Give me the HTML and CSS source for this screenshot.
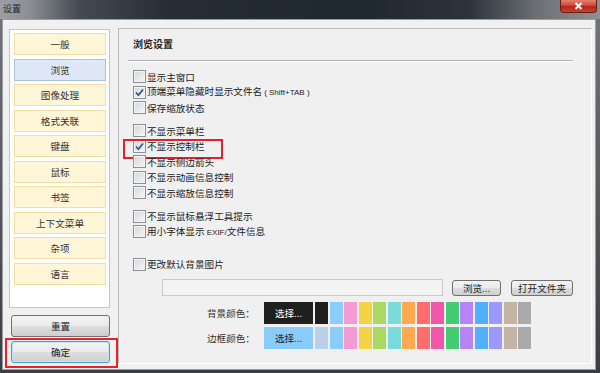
FILE: index.html
```html
<!DOCTYPE html>
<html lang="zh-CN">
  <head>
    <meta charset="utf-8">
    <title>设置</title>
    <link rel="stylesheet" href="styles.css">
  </head>
  <body>

  <div class="window">
    <div class="titlebar">
      <span class="title">设置</span>
      <span class="close">
        <svg width="9" height="8" viewBox="0 0 9 8"><path d="M1.5 1 L7.5 7 M7.5 1 L1.5 7" stroke="#fff" stroke-width="2"/></svg>
      </span>
    </div>

    <div class="client">
      <div class="sidebar">
        <div class="nav">
          <div class="nav-item">一般</div>
          <div class="nav-item active">浏览</div>
          <div class="nav-item">图像处理</div>
          <div class="nav-item">格式关联</div>
          <div class="nav-item">键盘</div>
          <div class="nav-item">鼠标</div>
          <div class="nav-item">书签</div>
          <div class="nav-item">上下文菜单</div>
          <div class="nav-item">杂项</div>
          <div class="nav-item">语言</div>
        </div>
        <button class="btn reset">重置</button>
        <button class="btn ok marked">确定</button>
      </div>

      <div class="group">
        <div class="group-title">浏览设置</div>
        <div class="separator"></div>

        <div class="checks first">
          <div class="check"><span class="box"></span><span class="text">显示主窗口</span></div>
          <div class="check"><span class="box checked"><svg width="11" height="11" viewBox="0 0 11 11"><path d="M2 5.5 L4.4 8.2 L9 2.5" fill="none" stroke="#2f4f97" stroke-width="1.7"/></svg></span><span class="text">顶端菜单隐藏时显示文件名<span class="latin">( Shift+TAB )</span></span></div>
          <div class="check"><span class="box"></span><span class="text">保存缩放状态</span></div>
        </div>

        <div class="checks second">
          <div class="check"><span class="box"></span><span class="text">不显示菜单栏</span></div>
          <div class="check marked"><span class="box checked"><svg width="11" height="11" viewBox="0 0 11 11"><path d="M2 5.5 L4.4 8.2 L9 2.5" fill="none" stroke="#2f4f97" stroke-width="1.7"/></svg></span><span class="text">不显示控制栏</span></div>
          <div class="check"><span class="box"></span><span class="text">不显示侧边箭头</span></div>
          <div class="check"><span class="box"></span><span class="text">不显示动画信息控制</span></div>
          <div class="check"><span class="box"></span><span class="text">不显示缩放信息控制</span></div>
        </div>

        <div class="checks third">
          <div class="check"><span class="box"></span><span class="text">不显示鼠标悬浮工具提示</span></div>
          <div class="check"><span class="box"></span><span class="text">用小字体显示 <span class="latin tight">EXIF/</span>文件信息</span></div>
        </div>

        <div class="checks fourth">
          <div class="check"><span class="box"></span><span class="text">更改默认背景图片</span></div>
        </div>

        <div class="file-row">
          <div class="path-box"></div>
          <button class="btn small browse">浏览...</button>
          <button class="btn small open">打开文件夹</button>
        </div>

        <div class="color-row">
          <span class="color-label">背景颜色：</span>
          <span class="pick dark">选择...</span>
          <span class="swatch" style="background:#1f1f1f"></span>
          <span class="swatch" style="background:#8acdfb"></span>
          <span class="swatch" style="background:#f59bd3"></span>
          <span class="swatch" style="background:#f4d444"></span>
          <span class="swatch" style="background:#abd860"></span>
          <span class="swatch" style="background:#7bdada"></span>
          <span class="swatch" style="background:#ffaa50"></span>
          <span class="swatch" style="background:#ff6d6d"></span>
          <span class="swatch" style="background:#f157a8"></span>
          <span class="swatch" style="background:#44cc72"></span>
          <span class="swatch" style="background:#b882f8"></span>
          <span class="swatch" style="background:#50b0ff"></span>
          <span class="swatch" style="background:#9c98ff"></span>
          <span class="swatch" style="background:#c3b4a6"></span>
          <span class="swatch" style="background:#aaaaaa"></span>
        </div>
        <div class="color-row">
          <span class="color-label">边框颜色：</span>
          <span class="pick light">选择...</span>
          <span class="swatch" style="background:#b9d0ea"></span>
          <span class="swatch" style="background:#8acdfb"></span>
          <span class="swatch" style="background:#f59bd3"></span>
          <span class="swatch" style="background:#f4d444"></span>
          <span class="swatch" style="background:#abd860"></span>
          <span class="swatch" style="background:#7bdada"></span>
          <span class="swatch" style="background:#ffaa50"></span>
          <span class="swatch" style="background:#ff6d6d"></span>
          <span class="swatch" style="background:#f157a8"></span>
          <span class="swatch" style="background:#44cc72"></span>
          <span class="swatch" style="background:#b882f8"></span>
          <span class="swatch" style="background:#50b0ff"></span>
          <span class="swatch" style="background:#9c98ff"></span>
          <span class="swatch" style="background:#c3b4a6"></span>
          <span class="swatch" style="background:#aaaaaa"></span>
        </div>
      </div>
    </div>
  </div>

  </body>
</html>
```

FILE: styles.css
```css
* {
  box-sizing: border-box;
}

html,
body {
  margin: 0;
  padding: 0;
}

body {
  width: 600px;
  height: 373px;
  overflow: hidden;
  font-family: "Noto Sans CJK SC", sans-serif;
  font-size: 9.6px;
  color: #222;
  background-color: #3d4248;
}

.window {
  display: flex;
  flex-direction: column;
  width: 600px;
  height: 373px;
  background: linear-gradient(to bottom, #73777c, #3a3e44);
}

.titlebar {
  display: flex;
  justify-content: space-between;
  align-items: flex-start;
  height: 19px;
  background: linear-gradient(to right, #9b9ea2 0%, #8b8f94 5%, #454b53 13%, #262d36 28%, #1f2731 60%, #2c333c 78%, #6e7277 90%, #8d9095 100%);
}

.title {
  padding: 3px 0 0 3px;
  font-size: 9px;
  line-height: 12px;
  color: #2a2a2a;
}

.close {
  display: flex;
  align-items: center;
  justify-content: center;
  width: 37px;
  height: 13px;
  margin-right: 3px;
  border: 1px solid #6a1d15;
  border-top: none;
  border-radius: 0 0 4px 4px;
  background: linear-gradient(to bottom, #e4806f, #cf4a36 45%, #b3281a 55%, #c84030);
}

.client {
  display: flex;
  height: 351px;
  margin: 0 4px 0 2px;
  padding: 8px 7px 5px 6px;
  border: 1px solid #9a9ea3;
  background-color: #f0f0f0;
}

/* left column */

.sidebar {
  display: flex;
  flex-direction: column;
  width: 101px;
  margin-top: 1px;
  margin-right: 8px;
}

.nav {
  display: flex;
  flex-direction: column;
  gap: 3.5px;
  height: 279px;
  padding: 3px 3px 0 4px;
  border: 1px solid #c6c6c6;
  background-color: #fff;
}

.nav-item {
  display: flex;
  align-items: center;
  justify-content: center;
  height: 22px;
  border: 1px solid #f4dca2;
  background-color: #fff5d7;
  color: #333;
}

.nav-item.active {
  border-color: #aac2e4;
  background-color: #dfe8f6;
}

.btn {
  height: 22px;
  padding: 0;
  border: 1px solid #707070;
  border-radius: 3px;
  background: linear-gradient(to bottom, #f3f3f3 0%, #ebebeb 48%, #dddddd 52%, #cfcfcf 100%);
  font-family: "Noto Sans CJK SC", sans-serif;
  font-size: 9.6px;
  color: #222;
}

.reset {
  width: 99px;
  margin: 7px 0 0 2px;
}

.ok {
  position: relative;
  width: 99px;
  margin: 4px 0 0 2px;
  border-color: #3c9ed6;
  box-shadow: inset 0 0 0 1px #c4e7f8;
}

.ok.marked::after {
  content: "";
  position: absolute;
  left: -7px;
  top: -4px;
  width: 109px;
  height: 26px;
  border: 2px solid #e3222b;
}

/* right group */

.group {
  flex: 1;
  display: flex;
  flex-direction: column;
  padding: 8px 18px 0 14px;
  border-top: 1px solid #bababa;
  border-left: 1px solid #bababa;
  border-right: 1px solid #fff;
  border-bottom: 1px solid #fff;
}

.group-title {
  height: 14px;
  line-height: 14px;
  font-size: 10px;
  font-weight: bold;
  color: #222;
}

.separator {
  height: 2px;
  margin: 9px 0 0 -5px;
  border-top: 1px solid #b4b4b4;
  border-bottom: 1px solid #fff;
}

.checks {
  display: flex;
  flex-direction: column;
}

.checks.first {
  margin-top: 7px;
}

.checks.second {
  margin-top: 7.5px;
}

.checks.third {
  margin-top: 8px;
}

.checks.fourth {
  margin-top: 17px;
}

.check {
  position: relative;
  display: flex;
  align-items: center;
  height: 15.5px;
  white-space: nowrap;
  color: #222;
}

.check .text {
  line-height: 14px;
}

.check.marked::after {
  content: "";
  position: absolute;
  left: -10px;
  top: 0;
  width: 96px;
  height: 16px;
  border: 2px solid #e3222b;
}

.box {
  display: flex;
  align-items: center;
  justify-content: center;
  width: 13px;
  height: 13px;
  margin-right: 1px;
  border: 1px solid #8e8f8f;
  background: linear-gradient(135deg, #d4d6d9, #f7f7f8);
  box-shadow: inset 0 0 0 1px #f4f4f4;
}

.latin {
  margin-left: 2px;
  font-family: "Liberation Sans", sans-serif;
  font-size: 8px;
}

.latin.tight {
  margin-left: 0;
}

.file-row {
  display: flex;
  align-items: center;
  height: 17px;
  margin: 7px 0 0 29px;
}

.path-box {
  width: 281px;
  height: 17px;
  border: 1px solid #c9c9c9;
  background-color: #f3f3f3;
}

.btn.small {
  height: 16px;
  line-height: 14px;
}

.browse {
  width: 49px;
  margin-left: 9px;
}

.open {
  width: 62px;
  margin-left: 10px;
}

.color-row {
  display: flex;
  align-items: center;
  gap: 1.5px;
  height: 22px;
  margin: 6px 0 0 74px;
}

.color-row + .color-row {
  margin-top: 3px;
}

.color-label {
  width: 55.5px;
  color: #333;
}

.pick {
  display: flex;
  align-items: center;
  justify-content: center;
  width: 49px;
  height: 22px;
  margin-right: 0.5px;
}

.pick.dark {
  background-color: #1f1f1f;
  color: #fff;
}

.pick.light {
  background-color: #89cbfa;
  color: #222;
}

.swatch {
  width: 13px;
  height: 22px;
}
```
